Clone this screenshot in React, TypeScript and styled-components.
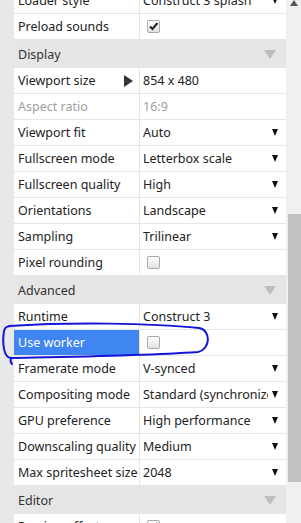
import styled, { createGlobalStyle } from 'styled-components';

type Prop =
  | { kind: 'header'; label: string }
  | {
      kind: 'row';
      label: string;
      value?: string;
      dropdown?: boolean;
      check?: boolean | 'on';
      muted?: boolean;
      expand?: boolean;
      selected?: boolean;
    };

const props: Prop[] = [
  { kind: 'row', label: 'Loader style', value: 'Construct 3 splash', dropdown: true },
  { kind: 'row', label: 'Preload sounds', check: 'on' },
  { kind: 'header', label: 'Display' },
  { kind: 'row', label: 'Viewport size', value: '854 x 480', expand: true },
  { kind: 'row', label: 'Aspect ratio', value: '16:9', muted: true },
  { kind: 'row', label: 'Viewport fit', value: 'Auto', dropdown: true },
  { kind: 'row', label: 'Fullscreen mode', value: 'Letterbox scale', dropdown: true },
  { kind: 'row', label: 'Fullscreen quality', value: 'High', dropdown: true },
  { kind: 'row', label: 'Orientations', value: 'Landscape', dropdown: true },
  { kind: 'row', label: 'Sampling', value: 'Trilinear', dropdown: true },
  { kind: 'row', label: 'Pixel rounding', check: true },
  { kind: 'header', label: 'Advanced' },
  { kind: 'row', label: 'Runtime', value: 'Construct 3', dropdown: true },
  { kind: 'row', label: 'Use worker', check: true, selected: true },
  { kind: 'row', label: 'Framerate mode', value: 'V-synced', dropdown: true },
  { kind: 'row', label: 'Compositing mode', value: 'Standard (synchronized)', dropdown: true },
  { kind: 'row', label: 'GPU preference', value: 'High performance', dropdown: true },
  { kind: 'row', label: 'Downscaling quality', value: 'Medium', dropdown: true },
  { kind: 'row', label: 'Max spritesheet size', value: '2048', dropdown: true },
  { kind: 'header', label: 'Editor' },
  { kind: 'row', label: 'Preview effects', check: 'on' },
];

const App = () => (
  <>
    <GlobalStyle />
    <Page>
      <Gutter />
      <Panel>
        <List>
          {props.map((p) =>
            p.kind === 'header' ? (
              <Header key={p.label}>
                <span>{p.label}</span>
                <Collapse />
              </Header>
            ) : (
              <Row key={p.label}>
                <Label $selected={p.selected} $muted={p.muted}>
                  <span>{p.label}</span>
                  {p.expand && <Expand />}
                </Label>
                <Value $muted={p.muted}>
                  {p.value && <ValueText>{p.value}</ValueText>}
                  {p.check !== undefined && (
                    <Check>
                      {p.check === 'on' && (
                        <svg width="11" height="11" viewBox="0 0 11 11">
                          <path d="M2 5.5 L4.5 8 L9.5 2" fill="none" stroke="#222" strokeWidth="2" />
                        </svg>
                      )}
                    </Check>
                  )}
                  {p.dropdown && <DropArrow />}
                </Value>
              </Row>
            )
          )}
        </List>
      </Panel>
      <Scrollbar>
        <UpArrow />
        <Thumb />
      </Scrollbar>
      <Scribble width="301" height="523" viewBox="0 0 301 523">
        <path
          d="M9 326 C70 322, 150 323, 199 328 C211 330, 211 349, 198 352 C140 356, 60 357, 11 358 C4 358, 2 344, 4 331 C5 327, 7 326, 12 326"
          fill="none"
          stroke="#1515d8"
          strokeWidth="2"
          strokeLinecap="round"
        />
        <path d="M11 358 C10 361, 11 363, 12 364" fill="none" stroke="#1515d8" strokeWidth="2" strokeLinecap="round" />
      </Scribble>
    </Page>
  </>
);

export default App;

const GlobalStyle = createGlobalStyle`
  html, body {
    margin: 0;
    padding: 0;
    overflow: hidden;
    background: #ffffff;
  }
  body {
    font-family: "Noto Sans", "Open Sans", sans-serif;
    font-size: 12.5px;
    color: #222;
  }
`;

const Page = styled.div`
  position: relative;
  display: flex;
  width: 301px;
  height: 523px;
  overflow: hidden;
`;

const Gutter = styled.div`
  width: 14px;
  flex-shrink: 0;
  background: #e8e8e8;
`;

const Panel = styled.div`
  width: 272px;
  flex-shrink: 0;
  overflow: hidden;
  background: #fff;
`;

const List = styled.div`
  margin-top: -12px;
  display: flex;
  flex-direction: column;
`;

const Header = styled.div`
  display: flex;
  align-items: center;
  justify-content: space-between;
  height: 28px;
  padding: 0 10px 0 4px;
  background: #e6e6e6;
  color: #333;
`;

const Collapse = styled.span`
  width: 0;
  height: 0;
  border-left: 6px solid transparent;
  border-right: 6px solid transparent;
  border-top: 9px solid #bdbdbd;
`;

const Row = styled.div`
  display: grid;
  grid-template-columns: 126px 1fr;
  height: 26px;
  box-sizing: border-box;
  border-bottom: 1px solid #e6e6e6;
`;

const Label = styled.div<{ $selected?: boolean; $muted?: boolean }>`
  display: flex;
  align-items: center;
  justify-content: space-between;
  padding: 0 6px 0 4px;
  border-right: 1px solid #e6e6e6;
  white-space: nowrap;
  background: ${({ $selected }) => ($selected ? '#3f86f2' : 'transparent')};
  color: ${({ $selected, $muted }) => ($selected ? '#fff' : $muted ? '#a0a0a0' : '#222')};
`;

const Expand = styled.span`
  width: 0;
  height: 0;
  border-top: 6px solid transparent;
  border-bottom: 6px solid transparent;
  border-left: 9px solid #333;
`;

const Value = styled.div<{ $muted?: boolean }>`
  display: flex;
  align-items: center;
  justify-content: space-between;
  gap: 4px;
  padding: 0 8px 0 3px;
  min-width: 0;
  color: ${({ $muted }) => ($muted ? '#a0a0a0' : '#222')};
`;

const ValueText = styled.span`
  white-space: nowrap;
  overflow: hidden;
  flex: 1;
  min-width: 0;
`;

const Check = styled.span`
  display: flex;
  align-items: center;
  justify-content: center;
  width: 13px;
  height: 13px;
  margin-left: 4px;
  box-sizing: border-box;
  border: 1px solid #a8a8a8;
  border-radius: 2px;
  background: linear-gradient(#ffffff, #e2e2e2);
`;

const DropArrow = styled.span`
  flex-shrink: 0;
  width: 0;
  height: 0;
  border-left: 3px solid transparent;
  border-right: 3px solid transparent;
  border-top: 7px solid #111;
`;

const Scrollbar = styled.div`
  position: relative;
  flex: 1;
  background: #f0f0f0;
  display: flex;
  flex-direction: column;
  align-items: flex-end;
`;

const UpArrow = styled.span`
  align-self: center;
  width: 0;
  height: 0;
  margin-top: 0;
  border-left: 4px solid transparent;
  border-right: 4px solid transparent;
  border-bottom: 6px solid #555;
`;

const Thumb = styled.div`
  width: 13px;
  height: 268px;
  margin-top: 208px;
  background: #c1c1c1;
`;

const Scribble = styled.svg`
  position: absolute;
  left: 0;
  top: 0;
  pointer-events: none;
`;
